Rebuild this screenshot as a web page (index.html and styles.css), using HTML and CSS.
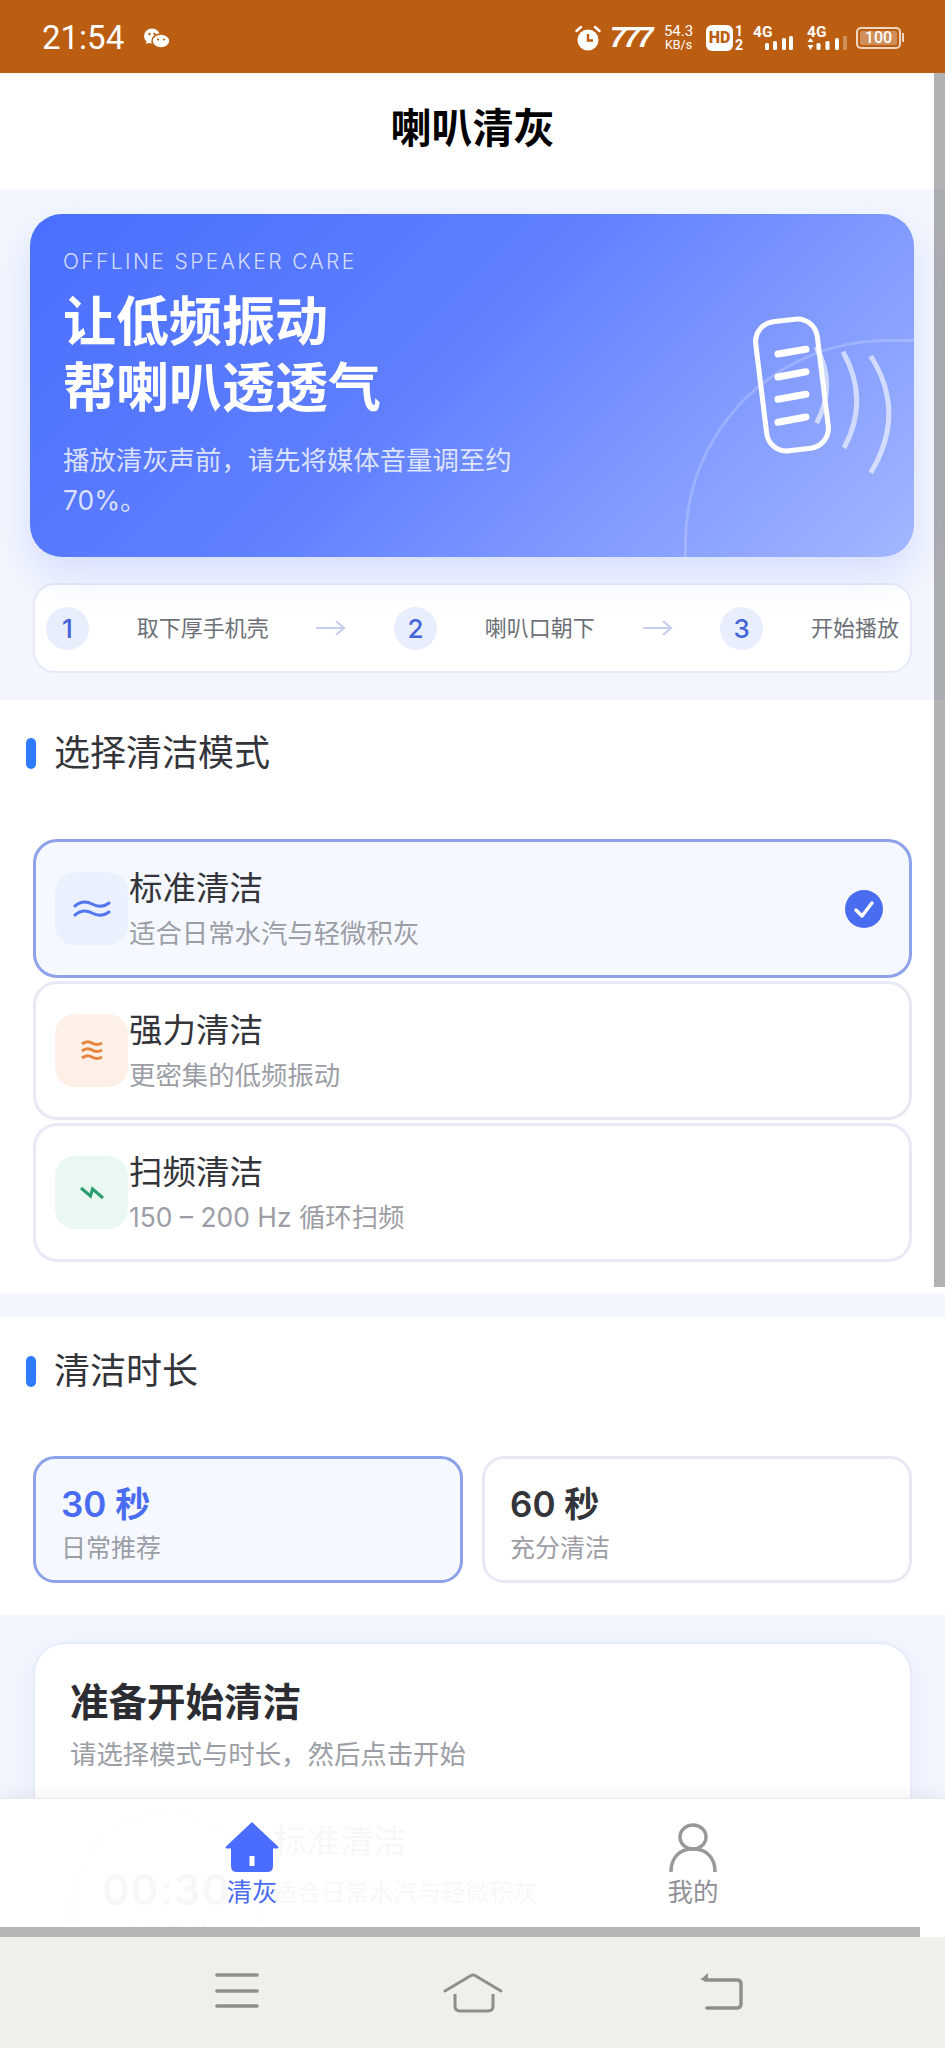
FILE: index.html
```html
<!DOCTYPE html>
<html lang="zh-CN">
<head>
  <meta charset="UTF-8">
  <meta name="viewport" content="width=device-width, initial-scale=1.0">
  <title>喇叭清灰</title>
  <link rel="stylesheet" href="styles.css">
</head>
<body>
  <div class="screen">
    <div class="statusbar">
      <span class="clock">21:54</span>
      <svg class="wechat" width="26" height="20" viewBox="0 0 26 20">
        <ellipse cx="8" cy="8" rx="8" ry="7.5" fill="#fff"/>
        <path d="M3 12 L2 16 L7 14 Z" fill="#fff"/>
        <ellipse cx="17" cy="13" rx="9" ry="7" fill="#fff" stroke="#bc5e12" stroke-width="1.5"/>
        <circle cx="5.5" cy="6" r="1.2" fill="#bc5e12"/>
        <circle cx="10.5" cy="6" r="1.2" fill="#bc5e12"/>
        <circle cx="14" cy="11.5" r="1.1" fill="#bc5e12"/>
        <circle cx="20" cy="11.5" r="1.1" fill="#bc5e12"/>
      </svg>
      <div class="status-right">
        <svg class="st-alarm" width="26" height="26" viewBox="0 0 26 26">
          <circle cx="13" cy="15" r="10.5" fill="#fff"/>
          <path d="M13 9 V15.5 H18" fill="none" stroke="#bc5e12" stroke-width="2.4"/>
          <path d="M1.5 6 L6 2 M24.5 6 L20 2" stroke="#fff" stroke-width="2.4" stroke-linecap="round"/>
        </svg>
        <span class="st-logo">777</span>
        <div class="st-speed"><span>54.3</span><span class="st-unit">KB/s</span></div>
        <span class="st-hd">HD</span>
        <div class="st-sim"><span>1</span><span>2</span></div>
        <svg class="st-signal" width="40" height="27" viewBox="0 0 40 27">
          <text x="0" y="13" class="sig-text">4G</text>
          <rect x="12" y="19" width="4" height="7" rx="1.5" fill="#fff"/>
          <rect x="20" y="17" width="4" height="9" rx="1.5" fill="#fff"/>
          <rect x="29" y="14" width="4" height="12" rx="1.5" fill="#fff"/>
          <rect x="36" y="12" width="4" height="14" rx="1.5" fill="#fff"/>
        </svg>
        <svg class="st-signal" width="40" height="27" viewBox="0 0 40 27">
          <text x="0" y="13" class="sig-text">4G</text>
          <path d="M3.5 14 L6.5 18 H0.5 Z M3.5 26 L0.5 21 H6.5 Z" fill="#fff"/>
          <rect x="9.5" y="19" width="4" height="7" rx="1.5" fill="#fff"/>
          <rect x="18.5" y="17" width="4" height="9" rx="1.5" fill="#fff"/>
          <rect x="28" y="14" width="4" height="12" rx="1.5" fill="#fff"/>
          <rect x="36" y="12" width="4" height="14" rx="1" fill="#fff" opacity=".3"/>
        </svg>
        <div class="st-battery"><span class="st-level">100</span></div>
      </div>
    </div>

    <div class="app">
      <div class="app-header">喇叭清灰</div>

      <div class="intro">
        <div class="hero">
          <div class="hero-ring"></div>
          <svg class="hero-speaker" width="160" height="180" viewBox="0 0 160 180">
            <rect x="21" y="20" width="62" height="130" rx="20" transform="rotate(-7 52 85)" fill="none" stroke="#fff" stroke-width="5"/>
            <g stroke="#fff" stroke-width="7" stroke-linecap="round">
              <path d="M38 54 L66 49.300"/>
              <path d="M38 77 L66 71.700"/>
              <path d="M38 99.300 L66 94.300"/>
              <path d="M38 122.300 L66 117"/>
            </g>
            <g fill="none" stroke="#fff" stroke-opacity=".6" stroke-width="5">
              <path d="M76 46.700 Q97 84 76.700 123"/>
              <path d="M103 51.700 Q130 100 104 148"/>
              <path d="M130.700 56 Q167 113 130.700 172.700"/>
            </g>
          </svg>
          <div class="hero-eyebrow">OFFLINE SPEAKER CARE</div>
          <h1 class="hero-title">让低频振动<br>帮喇叭透透气</h1>
          <p class="hero-sub">播放清灰声前，请先将媒体音量调至约 70%。</p>
        </div>

        <div class="steps">
          <span class="step-num">1</span>
          <span class="step-label">取下厚手机壳</span>
          <svg class="step-arrow" width="30" height="18" viewBox="0 0 30 18"><path d="M0 9 H28 M20 2 L28 9 L20 16" fill="none" stroke="#c6cfec" stroke-width="2.200"/></svg>
          <span class="step-num">2</span>
          <span class="step-label">喇叭口朝下</span>
          <svg class="step-arrow" width="30" height="18" viewBox="0 0 30 18"><path d="M0 9 H28 M20 2 L28 9 L20 16" fill="none" stroke="#c6cfec" stroke-width="2.200"/></svg>
          <span class="step-num">3</span>
          <span class="step-label">开始播放</span>
        </div>
      </div>

      <section class="section section-mode">
        <div class="section-head"><i class="section-bar"></i>选择清洁模式</div>
        <div class="mode-list">
          <div class="mode-card selected">
            <div class="mode-icon icon-blue">
              <svg width="38" height="18" viewBox="0 0 38 18"><path d="M2 6 Q10 -1 19 4 T36 3 M2 15 Q10 8 19 13 T36 12" fill="none" stroke="#5376f0" stroke-width="3" stroke-linecap="round"/></svg>
            </div>
            <div class="mode-text">
              <div class="mode-name">标准清洁</div>
              <div class="mode-desc">适合日常水汽与轻微积灰</div>
            </div>
            <svg class="mode-check" width="38" height="38" viewBox="0 0 38 38">
              <circle cx="19" cy="19" r="19" fill="#4a6cf0"/>
              <path d="M11 20 L17 26 L27 13" fill="none" stroke="#fff" stroke-width="3.400" stroke-linecap="round" stroke-linejoin="round"/>
            </svg>
          </div>
          <div class="mode-card">
            <div class="mode-icon icon-orange">
              <svg width="24" height="22" viewBox="0 0 24 22"><path d="M2 4 Q7 0 12 3 T22 3 M2 11 Q7 7 12 10 T22 10 M2 18 Q7 14 12 17 T22 17" fill="none" stroke="#e5853f" stroke-width="3"/></svg>
            </div>
            <div class="mode-text">
              <div class="mode-name">强力清洁</div>
              <div class="mode-desc">更密集的低频振动</div>
            </div>
          </div>
          <div class="mode-card">
            <div class="mode-icon icon-green">
              <svg width="24" height="14" viewBox="0 0 24 14"><path d="M1 2 L10.500 10 L12.500 3 L23 12" fill="none" stroke="#2a9d6f" stroke-width="3"/></svg>
            </div>
            <div class="mode-text">
              <div class="mode-name">扫频清洁</div>
              <div class="mode-desc">150 – 200 Hz 循环扫频</div>
            </div>
          </div>
        </div>
      </section>

      <section class="section section-time">
        <div class="section-head"><i class="section-bar"></i>清洁时长</div>
        <div class="time-grid">
          <div class="time-card selected">
            <div class="time-value">30 秒</div>
            <div class="time-note">日常推荐</div>
          </div>
          <div class="time-card">
            <div class="time-value">60 秒</div>
            <div class="time-note">充分清洁</div>
          </div>
        </div>
      </section>

      <div class="outro">
        <div class="ready">
          <h2 class="ready-title">准备开始清洁</h2>
          <p class="ready-sub">请选择模式与时长，然后点击开始</p>
          <div class="timer">
            <div class="timer-ring">
              <div class="timer-count">00:30</div>
              <div class="timer-label">本次时长</div>
            </div>
            <div class="timer-info">
              <div class="timer-mode">标准清洁</div>
              <div class="timer-desc">适合日常水汽与轻微积灰</div>
            </div>
          </div>
        </div>
      </div>

      <nav class="tabbar">
        <div class="tab active">
          <svg width="56" height="50" viewBox="0 0 56 50">
            <path d="M28 0 L54 24.500 Q55.500 26.500 53 26.500 H49 V44 Q49 50 43 50 H13 Q7 50 7 44 V26.500 H3 Q0.500 26.500 2 24.500 Z" fill="#4a6cff"/>
            <rect x="25.500" y="34" width="5" height="10" fill="#fff"/>
          </svg>
          <span>清灰</span>
        </div>
        <div class="tab">
          <svg width="56" height="50" viewBox="0 0 56 50">
            <ellipse cx="28" cy="15" rx="13" ry="12" fill="none" stroke="#97989c" stroke-width="3.500"/>
            <path d="M6 50 C6 35 15 27 28 27 C41 27 50 35 50 50" fill="none" stroke="#97989c" stroke-width="3.500"/>
          </svg>
          <span>我的</span>
        </div>
      </nav>

      <div class="scroll-v"></div>
      <div class="scroll-h"></div>
    </div>

    <div class="navbar">
      <svg class="nav-menu" width="44" height="36" viewBox="0 0 44 36">
        <path d="M2 2 H42 M2 18 H42 M2 33 H42" stroke="#8f8e88" stroke-width="3.600" stroke-linecap="round"/>
      </svg>
      <svg class="nav-home" width="60" height="40" viewBox="0 0 60 40">
        <path d="M2 18 L28 2.500 Q30 1.500 32 2.500 L58 18" fill="none" stroke="#8f8e88" stroke-width="3" stroke-linecap="round"/>
        <path d="M12 21 V33 Q12 38 17 38 H45 Q50 38 50 33 V21" fill="none" stroke="#8f8e88" stroke-width="3"/>
      </svg>
      <svg class="nav-back" width="44" height="38" viewBox="0 0 44 38">
        <path d="M9 0 V7 H1 Z" fill="#8f8e88"/>
        <path d="M6 7 H38 Q42 7 42 11 V31 Q42 35 38 35 H8" fill="none" stroke="#8f8e88" stroke-width="3.400" stroke-linecap="round"/>
      </svg>
    </div>
  </div>
</body>
</html>
```
FILE: styles.css
```css
* {
  box-sizing: border-box;
}

body {
  margin: 0;
  background: #fff;
  color: #2f3136;
  font-family: Inter, 'Noto Sans CJK SC', sans-serif;
}

h1, h2, p {
  margin: 0;
}

.screen {
  display: flex;
  flex-direction: column;
  width: 945px;
  height: 2048px;
  overflow: hidden;
}

/* status bar */
.statusbar {
  display: flex;
  align-items: center;
  flex: none;
  height: 73px;
  padding: 2px 42px 0;
  background: #bc5e12;
  color: #fff;
  font-family: Roboto, sans-serif;
}

.clock {
  font-size: 33px;
  line-height: 1;
}

.wechat {
  margin-left: 20px;
}

.status-right {
  display: flex;
  align-items: center;
  margin-left: auto;
}

.st-alarm {
  margin-right: 9px;
}

.st-logo {
  width: 41px;
  margin-right: 11px;
  font-family: 'Liberation Sans', sans-serif;
  font-size: 29px;
  font-weight: 700;
  font-style: italic;
  letter-spacing: -2.500px;
  line-height: 1;
}

.st-speed {
  display: flex;
  flex-direction: column;
  align-items: center;
  width: 33px;
  margin-right: 11px;
  font-size: 15px;
  line-height: 14px;
}

.st-unit {
  font-size: 12.500px;
}

.st-hd {
  width: 27px;
  height: 26px;
  margin-right: 2px;
  border-radius: 6px;
  background: #fff;
  color: #bc5e12;
  font-size: 16px;
  font-weight: 900;
  line-height: 26px;
  text-align: center;
}

.st-sim {
  display: flex;
  flex-direction: column;
  align-items: center;
  width: 8px;
  margin-right: 10px;
  font-size: 14px;
  font-weight: 700;
  line-height: 14px;
}

.st-signal {
  margin-right: 14px;
}

.st-signal + .st-battery {
  margin-left: -5px;
}

.sig-text {
  fill: #fff;
  font-size: 15.500px;
  font-weight: 700;
}

.st-battery {
  position: relative;
  width: 45px;
  height: 22px;
  padding: 2px;
  margin-right: 2px;
  border: 2px solid rgba(255, 255, 255, .75);
  border-radius: 5px;
}

.st-battery::after {
  content: "";
  position: absolute;
  top: 4px;
  right: -5px;
  width: 2px;
  height: 9px;
  background: rgba(255, 255, 255, .75);
}

.st-level {
  display: block;
  height: 14px;
  border-radius: 2px;
  background: rgba(255, 255, 255, .3);
  font-size: 16px;
  font-weight: 500;
  line-height: 14px;
  text-align: center;
}

/* app */
.app {
  position: relative;
  flex: 1;
  overflow: hidden;
  background: #f3f6fe;
}

.app-header {
  height: 116px;
  background: #fff;
  color: #000;
  font-size: 41px;
  font-weight: 700;
  line-height: 110px;
  text-align: center;
}

.intro {
  height: 511px;
  padding: 25px 31px 0 30px;
}

.hero {
  position: relative;
  height: 343px;
  padding: 33px 33px 0;
  overflow: hidden;
  border-radius: 32px;
  background: linear-gradient(135deg, #4a6fff 0%, #5f7fff 45%, #a3b6ff 100%);
  color: #fff;
  box-shadow: 0 18px 36px rgba(76, 110, 255, .17);
}

.intro .hero {
  overflow: visible;
}

.hero-ring {
  position: absolute;
  top: 125px;
  left: 654px;
  width: 230px;
  height: 218px;
  border-top: 3px solid rgba(255, 255, 255, .2);
  border-left: 3px solid rgba(255, 255, 255, .2);
  border-top-left-radius: 203px 203px;
  pointer-events: none;
}

.hero-speaker {
  position: absolute;
  top: 86px;
  left: 710px;
}

.hero-eyebrow {
  font-size: 21px;
  font-weight: 300;
  letter-spacing: 2.400px;
  line-height: 30px;
  color: rgba(255, 255, 255, .75);
}

.hero-title {
  margin-top: 12px;
  font-size: 53px;
  font-weight: 700;
  line-height: 66px;
}

.hero-sub {
  max-width: 470px;
  margin-top: 20px;
  font-size: 26.400px;
  line-height: 39.500px;
  color: rgba(255, 255, 255, .78);
}

.steps {
  display: flex;
  align-items: center;
  justify-content: space-between;
  height: 90px;
  margin: 26px 2px 0 3px;
  padding: 0 11px 0 11px;
  border: 2px solid #e5e9f8;
  border-radius: 22px;
  background: #fff;
}

.step-num {
  width: 43px;
  height: 43px;
  border-radius: 50%;
  background: #e9eefd;
  color: #4464d8;
  font-size: 26px;
  font-weight: 500;
  line-height: 43px;
  text-align: center;
}

.step-label {
  color: #6d7078;
  font-size: 22px;
  line-height: 30px;
}

/* sections */
.section {
  padding-right: 33px;
  padding-left: 26px;
  background: #fff;
}

.section-mode {
  height: 593px;
  padding-top: 36px;
}

.section-time {
  height: 298px;
  margin-top: 24px;
  padding-top: 37px;
}

.section-head {
  display: flex;
  align-items: center;
  gap: 18px;
  height: 34px;
  color: #33353a;
  font-size: 36px;
  line-height: 34px;
}

.section-bar {
  width: 10px;
  height: 31px;
  border-radius: 5px;
  background: #2f7bff;
}

.mode-list {
  display: flex;
  flex-direction: column;
  gap: 3px;
  margin: 69px 0 0 7px;
}

.mode-card {
  display: flex;
  align-items: center;
  height: 139px;
  padding: 0 26px 0 19px;
  border: 3px solid #e7eaf4;
  border-radius: 24px;
  background: #fff;
}

.mode-card.selected,
.time-card.selected {
  border-color: #8ea2ea;
  background: #f5f8ff;
}

.mode-icon {
  display: flex;
  align-items: center;
  justify-content: center;
  flex: none;
  width: 73px;
  height: 73px;
  border-radius: 20px;
}

.icon-blue {
  background: #ebf0fe;
}

.icon-orange {
  background: #fff0e7;
}

.icon-green {
  background: #e9f8f2;
}

.mode-text {
  padding-top: 4px;
  margin-left: 1px;
}

.mode-name {
  font-size: 33.500px;
  line-height: 45px;
  color: #33353a;
}

.mode-desc {
  font-size: 26.400px;
  line-height: 45px;
  color: #9c9ea6;
}

.mode-check {
  margin-left: auto;
}

.time-grid {
  display: grid;
  grid-template-columns: 1fr 1fr;
  gap: 19px;
  margin: 68px 0 0 7px;
}

.time-card {
  height: 127px;
  padding: 22px 0 0 25px;
  border: 3px solid #e7eaf4;
  border-radius: 22px;
  background: #fff;
}

.time-value {
  font-size: 35px;
  font-weight: 600;
  line-height: 46px;
  color: #33353a;
}

.selected .time-value {
  color: #4a6cf0;
}

.time-note {
  margin-top: 3px;
  font-size: 25px;
  line-height: 36px;
  color: #9c9ea6;
}

.outro {
  padding: 27px 33px 0;
}

.ready {
  height: 400px;
  padding: 35px 35px 0;
  border: 2px solid #e7ebfa;
  border-radius: 32px;
  background: #fff;
  box-shadow: 0 10px 30px rgba(76, 110, 255, .08);
}

.ready-title {
  font-size: 38.500px;
  font-weight: 700;
  line-height: 46px;
  color: #2b2d33;
}

.ready-sub {
  margin-top: 9px;
  font-size: 26.400px;
  line-height: 40px;
  color: #9c9ea6;
}

/* sits behind the tab bar, only shows through faintly */
.timer {
  display: flex;
  margin-top: 37px;
}

.timer-ring {
  display: flex;
  flex-direction: column;
  align-items: center;
  justify-content: center;
  flex: none;
  width: 192px;
  height: 192px;
  border: 4px solid #d5d9e6;
  border-radius: 50%;
}

.timer-count {
  font-size: 42px;
  font-weight: 600;
  letter-spacing: 1px;
  line-height: 50px;
  color: #33353a;
}

.timer-label {
  margin-top: 4px;
  font-size: 22px;
  line-height: 30px;
  color: #33353a;
}

.timer-info {
  margin: 8px 0 0 11px;
}

.timer-mode {
  font-size: 33.500px;
  line-height: 44px;
  color: #33353a;
}

.timer-desc {
  margin-top: 8px;
  font-size: 24px;
  line-height: 44px;
  color: #33353a;
}

/* tab bar */
.tabbar {
  position: absolute;
  right: 0;
  bottom: 0;
  left: 0;
  display: grid;
  grid-template-columns: 1fr 1fr;
  height: 139px;
  padding: 23px 31.500px 0;
  border-top: 1px solid #e8e8e8;
  background: rgba(255, 255, 255, .96);
  box-shadow: 0 -4px 14px rgba(0, 0, 0, .05);
}

.tab {
  display: flex;
  flex-direction: column;
  align-items: center;
  color: #8e9096;
  font-size: 25.500px;
  line-height: 34px;
}

.tab svg {
  margin-bottom: 3px;
}

.tab.active {
  color: #4a6cf0;
}

/* overlay scrollbars */
.scroll-v {
  position: absolute;
  top: 0;
  right: 0;
  width: 11px;
  height: 1214px;
  background: rgba(0, 0, 0, .3);
}

.scroll-h {
  position: absolute;
  bottom: 0;
  left: 0;
  width: 920px;
  height: 10px;
  background: #b5b5b5;
}

/* system nav */
.navbar {
  display: flex;
  align-items: flex-start;
  flex: none;
  height: 111px;
  padding: 36px 0 0 215px;
  background: #f0efea;
}

.nav-home {
  margin-left: 184px;
}

.nav-back {
  margin-left: 196px;
}
```
